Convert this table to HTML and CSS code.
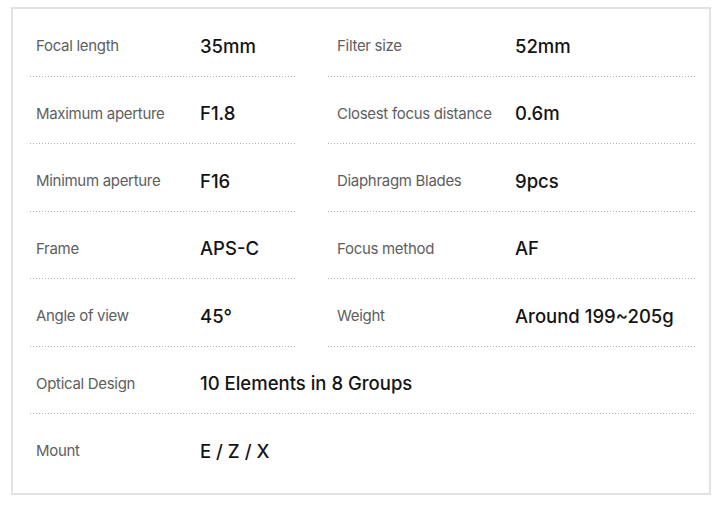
FILE: index.html
```html
<!DOCTYPE html>
<html>
<head>
    <meta charset="UTF-8">
    <title>Lens specifications</title>
    <link rel="stylesheet" href="styles.css">
</head>
<body>
    <div class="specs">
        <div class="row">
            <div class="cell left"><span class="label">Focal length</span><span class="value">35mm</span></div>
            <div class="cell right"><span class="label">Filter size</span><span class="value">52mm</span></div>
        </div>
        <div class="row">
            <div class="cell left"><span class="label">Maximum aperture</span><span class="value">F1.8</span></div>
            <div class="cell right"><span class="label">Closest focus distance</span><span class="value">0.6m</span></div>
        </div>
        <div class="row">
            <div class="cell left"><span class="label">Minimum aperture</span><span class="value">F16</span></div>
            <div class="cell right"><span class="label">Diaphragm Blades</span><span class="value">9pcs</span></div>
        </div>
        <div class="row">
            <div class="cell left"><span class="label">Frame</span><span class="value">APS-C</span></div>
            <div class="cell right"><span class="label">Focus method</span><span class="value">AF</span></div>
        </div>
        <div class="row">
            <div class="cell left"><span class="label">Angle of view</span><span class="value">45°</span></div>
            <div class="cell right"><span class="label">Weight</span><span class="value">Around 199~205g</span></div>
        </div>
        <div class="row">
            <div class="cell left full"><span class="label">Optical Design</span><span class="value">10 Elements in 8 Groups</span></div>
        </div>
        <div class="row">
            <div class="cell left full last"><span class="label">Mount</span><span class="value">E / Z / X</span></div>
        </div>
    </div>
</body>
</html>
```

FILE: styles.css
```css
html, body {
    margin: 0;
    background: #fff;
}

body {
    font-family: Inter, "Noto Sans", sans-serif;
}

.specs {
    box-sizing: border-box;
    width: 700px;
    height: 488px;
    margin: 7px 0 0 11px;
    border: 2px solid #e2e2e2;
    padding: 0 14px 0 17px;
}

.row {
    display: flex;
    gap: 32px;
    height: 67.5px;
}

/* dotted rule: 1px dot every 3px */
.cell {
    box-sizing: border-box;
    display: flex;
    align-items: center;
    padding-top: 6px;
    background-image: linear-gradient(to right, #b4b4b4 1px, transparent 1px);
    background-size: 3px 1px;
    background-repeat: repeat-x;
    background-position: left bottom;
}

.cell.left {
    width: 266px;
}

.cell.right {
    flex: 1;
}

.cell.full {
    width: auto;
    flex: 1;
}

.cell.last {
    background: none;
}

.label {
    font-size: 15px;
    color: #5e5e5e;
    letter-spacing: -0.3px;
}

.left .label {
    width: 164px;
    padding-left: 6px;
}

.right .label {
    width: 178px;
    padding-left: 9px;
}

.value {
    font-size: 18.5px;
    font-weight: 500;
    color: #141414;
}
```
